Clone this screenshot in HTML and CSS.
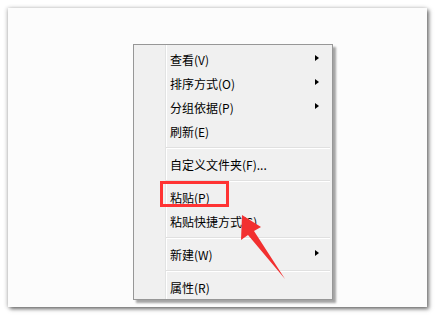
FILE: index.html
```html
<!DOCTYPE html>
<html lang="zh-CN">
<head>
  <meta charset="UTF-8">
  <title>右键菜单</title>
  <link rel="stylesheet" href="styles.css">
</head>
<body>
  <div class="page">
    <div class="panel">
      <ul class="menu">
        <li class="item sub">查看(V)</li>
        <li class="item sub">排序方式(O)</li>
        <li class="item sub">分组依据(P)</li>
        <li class="item">刷新(E)</li>
        <li class="sep"></li>
        <li class="item">自定义文件夹(F)...</li>
        <li class="sep"></li>
        <li class="item mark">粘贴(P)<span class="box"></span></li>
        <li class="item">粘贴快捷方式(S)</li>
        <li class="sep"></li>
        <li class="item sub">新建(W)</li>
        <li class="sep"></li>
        <li class="item">属性(R)</li>
      </ul>
    </div>
    <svg class="arrow" width="436" height="317" viewBox="0 0 436 317">
      <polygon points="242,215 261,227 254,231 285,279 248,235 241,240" fill="#f23030"/>
    </svg>
  </div>
</body>
</html>
```

FILE: styles.css
```css
body { margin:0; padding:0; background:#fff; font-family:"Noto Sans CJK SC", "Noto Sans", sans-serif; }
.page { position:relative; width:436px; height:317px; padding:8px; box-sizing:border-box; }
.panel {
  width:419px; height:299px; box-sizing:border-box;
  padding:36px 0 0 125px;
  background:#fcfcfc;
  box-shadow:2px 2px 4px rgba(0,0,0,0.55), -1px 0 4px rgba(0,0,0,0.2);
}
.menu {
  list-style:none; margin:0; padding:2px 2px 0;
  width:200px; box-sizing:border-box;
  border:1px solid #979797;
  background:linear-gradient(to right, transparent 31px, #e2e3e3 31px, #e2e3e3 32px, #fff 32px, #fff 33px, transparent 33px), #f0f0f0;
  box-shadow:3px 3px 2px rgba(0,0,0,0.35);
}
.item {
  position:relative; display:flex; align-items:center;
  height:24px; padding-left:34px;
  font-size:12px; color:#000;
}
.sub::after {
  content:""; position:absolute; right:11px; top:8px;
  border-style:solid; border-width:3.5px 0 3.5px 4px;
  border-color:transparent transparent transparent #000;
}
.sep {
  height:9px; margin-left:30px;
  background:linear-gradient(to bottom, transparent 4px, #e0e0e0 4px, #e0e0e0 5px, #fff 5px, #fff 6px, transparent 6px);
}
.box {
  position:absolute; left:24px; top:-4px;
  width:69px; height:26px; box-sizing:border-box;
  border:3px solid #f33;
}
.arrow { position:absolute; left:0; top:0; pointer-events:none; }
```
